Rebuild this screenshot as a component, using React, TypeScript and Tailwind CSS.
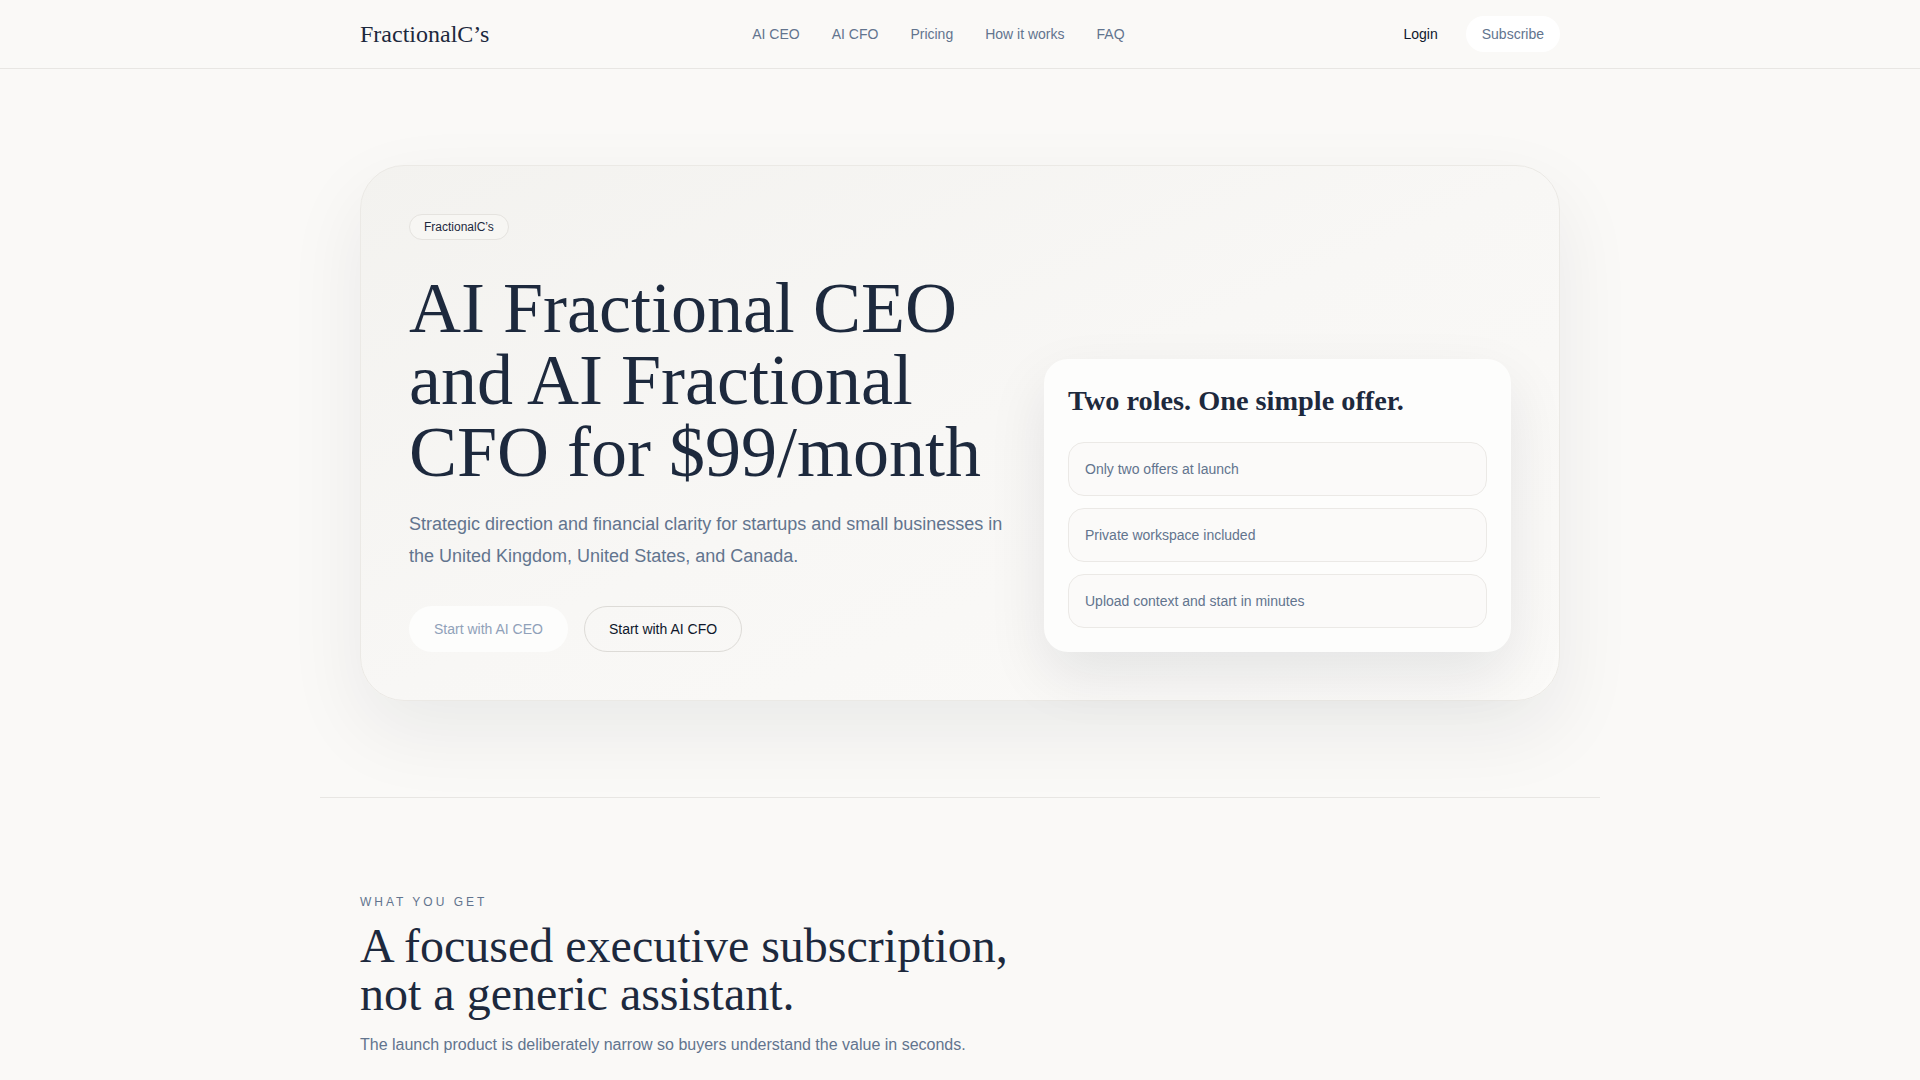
import React from "react";

const serif = "font-['Liberation_Serif',serif]";

export default function App() {
  return (
    <div className="min-h-screen bg-[#faf9f7] font-['Liberation_Sans',Arial,sans-serif] text-slate-800">
      <header className="border-b border-[#e8e6e3] bg-[#faf9f7]">
        <div className="mx-auto flex h-[68px] max-w-7xl items-center justify-between px-10">
          <a className={`${serif} text-2xl text-slate-800`}>FractionalC’s</a>
          <nav className="flex items-center gap-8 text-sm text-slate-500">
            <a>AI CEO</a>
            <a>AI CFO</a>
            <a>Pricing</a>
            <a>How it works</a>
            <a>FAQ</a>
          </nav>
          <div className="flex items-center gap-3 text-sm">
            <button className="px-4 py-2 text-slate-900">Login</button>
            <button className="rounded-full bg-white px-4 py-2 text-slate-500">Subscribe</button>
          </div>
        </div>
      </header>

      <main>
        <section className="mx-auto max-w-7xl px-10 py-24">
          <div className="rounded-[44px] border border-[#ebe9e5] bg-gradient-to-br from-[#f3f2ef] via-[#f8f7f5] to-[#fbfaf8] p-12 shadow-[0_30px_80px_rgba(15,23,42,0.07)]">
            <div className="grid grid-cols-[1fr_467px] items-end gap-8">
              <div>
                <span className="inline-block rounded-full border border-[#e5e3df] bg-[#f7f6f3] px-[14px] py-1 text-xs leading-4 text-slate-800">
                  FractionalC’s
                </span>
                <h1 className={`${serif} mt-8 text-7xl font-normal leading-none text-slate-800`}>
                  AI Fractional CEO
                  <br />
                  and AI Fractional
                  <br />
                  CFO for $99/month
                </h1>
                <p className="mt-5 text-lg leading-8 text-slate-500">
                  Strategic direction and financial clarity for startups and small businesses in the United Kingdom, United States, and Canada.
                </p>
                <div className="mt-[34px] flex items-center gap-4 text-sm">
                  <button className="rounded-full border border-transparent bg-[#fdfdfc] px-6 py-3 text-slate-400">
                    Start with AI CEO
                  </button>
                  <button className="rounded-full border border-[#dddbd7] px-6 py-3 text-slate-900">
                    Start with AI CFO
                  </button>
                </div>
              </div>

              <div className="rounded-3xl bg-[#fdfdfc] p-6 shadow-[0_24px_60px_rgba(15,23,42,0.09)]">
                <h2 className={`${serif} text-[28.3px] font-bold leading-tight text-slate-800`}>
                  Two roles. One simple offer.
                </h2>
                <div className="mt-6 flex flex-col gap-3">
                  {[
                    "Only two offers at launch",
                    "Private workspace included",
                    "Upload context and start in minutes",
                  ].map((t) => (
                    <div
                      key={t}
                      className="rounded-2xl border border-[#ebe9e6] bg-[#fbfaf9] px-4 py-4 text-sm text-slate-500"
                    >
                      {t}
                    </div>
                  ))}
                </div>
              </div>
            </div>
          </div>
        </section>

        <section className="mx-auto max-w-7xl border-t border-[#e8e6e3]">
          <div className="px-10 pt-24 pb-24">
            <p className="text-xs uppercase tracking-[0.25em] text-slate-500">What you get</p>
            <h2 className={`${serif} mt-3 max-w-[680px] text-5xl font-normal leading-none text-slate-800`}>
              A focused executive subscription, not a generic assistant.
            </h2>
            <p className="mt-[15px] text-base text-slate-500">
              The launch product is deliberately narrow so buyers understand the value in seconds.
            </p>
          </div>
        </section>
      </main>
    </div>
  );
}
